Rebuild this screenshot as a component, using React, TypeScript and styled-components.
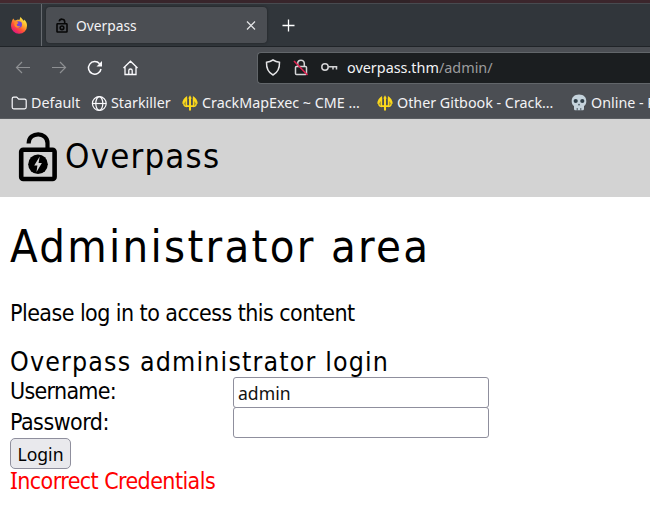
import React from "react";
import styled, { createGlobalStyle } from "styled-components";

const Global = createGlobalStyle`
  * { box-sizing: border-box; }
  html, body { margin: 0; background: #fff; overflow: hidden; }
`;

const Window = styled.div`
  width: 650px;
  height: 532px;
  overflow: hidden;
  display: flex;
  flex-direction: column;
  font-family: "Noto Sans", sans-serif;
  color: #f3f3f5;
`;
const Desktop = styled.div`
  height: 3px;
  flex: none;
  background: linear-gradient(90deg, #44292f 0 110px, #38252b 110px 300px, #302327 300px 410px, #3b262c 410px);
`;
const TabStrip = styled.div`
  height: 44px;
  flex: none;
  display: flex;
  align-items: center;
  background: #31363b;
  border-top: 1px solid #484b50;
  border-bottom: 1px solid #202428;
`;
const FirefoxView = styled.div`
  width: 42px;
  height: 42px;
  display: flex;
  align-items: center;
  padding-left: 10px;
  border-right: 1px solid #676b70;
`;
const Tab = styled.div`
  width: 221px;
  height: 36px;
  margin-left: 4px;
  padding: 1px 10px 0;
  display: flex;
  align-items: center;
  border-radius: 4px;
  background: #4b4e53;
  box-shadow: 0 0 3px rgba(0, 0, 0, 0.4);
`;
const TabTitle = styled.span`
  flex: 1;
  margin-left: 8px;
  font-size: 13.8px;
  line-height: 20px;
`;
const NewTab = styled.div`
  margin-left: 15px;
  height: 14px;
  display: flex;
`;
const NavBar = styled.div`
  height: 40px;
  flex: none;
  display: flex;
  align-items: center;
  background: #4b4e53;
`;
const NavButtons = styled.div`
  display: flex;
  gap: 20px;
  width: 257px;
  padding: 2px 0 0 15px;
`;
const UrlBar = styled.div`
  flex: 1;
  height: 32px;
  margin-top: 1px;
  display: flex;
  align-items: center;
  padding-left: 7px;
  background: #1b1e20;
  border: 1px solid #62666a;
  border-right: 0;
  border-radius: 4px 0 0 4px;
`;
const UrlIcons = styled.div`
  display: flex;
  gap: 12px;
`;
const Url = styled.span`
  margin-left: 9px;
  font-size: 14.4px;
  line-height: 20px;
  white-space: pre;
`;
const Path = styled.span`
  color: #9b9c9e;
`;
const Bookmarks = styled.div`
  height: 32px;
  flex: none;
  display: flex;
  align-items: center;
  background: #4b4e53;
  border-bottom: 1px solid #5a5d61;
`;
const Bookmark = styled.div<{ $w: number }>`
  width: ${(p) => p.$w}px;
  flex: none;
  display: flex;
  align-items: center;
  gap: 4px;
  font-size: 14.3px;
  line-height: 20px;
  white-space: nowrap;
  svg { flex: none; }
  &:first-child { margin-left: 11px; }
`;
const SiteHeader = styled.header`
  height: 78px;
  flex: none;
  padding: 0 0 3px 18px;
  display: flex;
  align-items: center;
  background: #d3d3d3;
  color: #000;
`;
const Type = styled.div<{ $size: number; $line: number; $spacing: number }>`
  font-family: "DejaVu Sans Condensed", "DejaVu Sans", sans-serif;
  font-stretch: condensed;
  font-size: ${(p) => p.$size}px;
  line-height: ${(p) => p.$line}px;
  letter-spacing: ${(p) => p.$spacing}px;
  white-space: nowrap;
`;
const Brand = styled(Type)`
  margin: 0 0 2px 7px;
`;
const Page = styled.main`
  flex: 1;
  padding: 20px 10px 0;
  background: #fff;
  color: #000;
`;
const Heading = styled(Type).attrs({ as: "h1" })`
  margin: 0 0 22px;
  font-weight: 400;
`;
const Intro = styled(Type)`
  margin-bottom: 20px;
`;
const Field = styled.label`
  display: grid;
  grid-template-columns: 223px 256px;
  height: 30px;
`;
const Input = styled.input`
  height: 31px;
  width: 256px;
  padding: 0 4px;
  border: 1px solid #8f8f9d;
  border-radius: 3px;
  background: #fff;
  color: #111;
  font: 17.6px "Noto Sans", sans-serif;
`;
const LoginButton = styled.button`
  display: block;
  width: 61px;
  height: 31px;
  margin-top: 1px;
  padding: 1px 0 0;
  border: 1px solid #8f8f9d;
  border-radius: 5px;
  background: #e9e9ed;
  color: #000;
  font: 17.6px "Noto Sans", sans-serif;
`;
const ErrorText = styled(Type)`
  color: #f00;
`;
const SerifI = styled.span`
  font-family: "Noto Sans", sans-serif;
  line-height: 1;
`;

const Firefox = () => (
  <svg width="18" height="18" viewBox="0 0 18 18">
    <defs>
      <linearGradient id="fire" x1=".85" y1=".1" x2=".25" y2=".95">
        <stop offset="0" stopColor="#fff04a" />
        <stop offset=".35" stopColor="#ffb02c" />
        <stop offset=".65" stopColor="#ff5135" />
        <stop offset="1" stopColor="#e3147f" />
      </linearGradient>
    </defs>
    <path d="M3.200 2.500 4.800 4.600l2-.5C7.500 3 8.800 3.300 9.200 4.300L10.700.7c.6 1.400 1.200 2 2 2.800l1.300 1.400.2-1.400c2 2 2.900 4 2.800 6.200A8 8 0 0 1 1 10c0-2.800.8-4.900 2.200-7.500Z" fill="url(#fire)" />
    <circle cx="8.800" cy="8.500" r="3.200" fill="#7347d6" />
    <path d="M4.500 6.200c1.500-.8 3-.4 4 .8L6.700 8.400l.4 1.300c1 .8 2.200.3 3.200.2-.9 2-3.300 2.400-5 .8-1-.9-1.300-2.700-.8-4.500Z" fill="#ff8a2d" />
  </svg>
);
const TabLock = () => (
  <svg width="12" height="15" viewBox="0 0 12 15" fill="none" stroke="#070707" strokeWidth="1.600">
    <rect x="1" y="5.800" width="10" height="8.200" rx=".6" />
    <path d="M3.200 3.400C3.700.4 8.500.4 8.700 3.600v2" />
    <circle cx="6" cy="9.800" r="1.800" />
  </svg>
);
const OverpassLock = () => (
  <svg width="40" height="51" viewBox="0 0 40 51">
    <rect x="3.200" y="18.700" width="33.400" height="29.300" rx="2" fill="none" stroke="#000" strokeWidth="4.600" />
    <path d="M10.700 12.500v-.7C11 .5 29.500.5 29.500 12v6" fill="none" stroke="#000" strokeWidth="4.200" />
    <circle cx="20" cy="33.300" r="9.800" fill="#000" />
    <path d="m21.700 25.600-5.500 8.900h3.200l-.9 6.500 5.400-9h-3.300Z" fill="#d3d3d3" />
  </svg>
);
const Trident = () => (
  <svg width="16" height="16" viewBox="0 0 16 16" fill="none" stroke="#fbd81b">
    <path d="M8 2v13.500" strokeWidth="2" />
    <path d="M4.300 3v6.500c0 1 .6 1.700 1.700 1.700h4c1.100 0 1.700-.7 1.700-1.700V3" strokeWidth="1.700" />
    <path d="M2.600 6C.8 9 2 11.500 5 11.500M13.400 6c1.800 3 .6 5.500-2.400 5.500" strokeWidth="1.500" />
    <path d="m8 .2 1.800 3.300H6.200ZM5.100 1v4.300L.2 9C.3 5.500 2.200 2.500 5.100 1ZM10.900 1v4.300L15.800 9c-.1-3.500-2-6.500-4.900-8Z" fill="#fbd81b" stroke="none" />
  </svg>
);
const Skull = () => (
  <svg width="16" height="17" viewBox="0 0 16 17">
    <path d="M8 .5c4.700 0 7.300 2.800 7.300 6.700 0 2.200-.7 3.800-2.300 4.900v2.700c0 1-.7 1.500-1.500 1.500h-7c-.8 0-1.500-.5-1.500-1.500v-2.700C1.400 11 .7 9.400.7 7.200.7 3.300 3.300.5 8 .5Z" fill="#c5d3dc" />
    <circle cx="4.700" cy="7" r="2.100" fill="#31404a" />
    <circle cx="11.300" cy="7" r="2.100" fill="#31404a" />
    <path d="m8 9.500 1.200 1.800H6.800Z" fill="#31404a" />
    <path d="M6.200 14v2.500M9.800 14v2.500" stroke="#4b5961" />
  </svg>
);

export default function App() {
  return (
    <Window>
      <Global />
      <Desktop />
      <TabStrip>
        <FirefoxView><Firefox /></FirefoxView>
        <Tab>
          <TabLock />
          <TabTitle>Overpass</TabTitle>
          <svg width="12" height="12" viewBox="0 0 12 12" stroke="#e4e5e7" strokeWidth="1.200"><path d="m2 1.500 8 8M10 1.500l-8 8" /></svg>
        </Tab>
        <NewTab>
          <svg width="14" height="14" viewBox="0 0 14 14" stroke="#fff" strokeWidth="1.300"><path d="M6.500 1.500v12M.5 7.500h12" /></svg>
        </NewTab>
      </TabStrip>
      <NavBar>
        <NavButtons>
          <svg width="16" height="16" viewBox="0 0 16 16" fill="none" stroke="#8e9093" strokeWidth="1.200"><path d="M15 7.500H1.500M7 2 1.500 7.500 7 13" /></svg>
          <svg width="16" height="16" viewBox="0 0 16 16" fill="none" stroke="#8e9093" strokeWidth="1.200"><path d="M1 7.500h13.500M9 2l5.500 5.500L9 13" /></svg>
          <svg width="16" height="16" viewBox="0 0 16 16" fill="none" stroke="#fbfbfe" strokeWidth="1.500"><path d="M14 9A6.300 6.300 0 1 1 12.600 3.800" /><path d="M15 1v5.500H9.500Z" fill="#fbfbfe" stroke="none" /></svg>
          <svg width="16" height="16" viewBox="0 0 16 16" fill="none" stroke="#fbfbfe" strokeWidth="1.300"><path d="M.5 8 7.500 1.200 14.500 8M2 6.700v7.800h11V6.700M5.800 14.500v-4c0-2 3.400-2 3.400 0v4" /></svg>
        </NavButtons>
        <UrlBar>
          <UrlIcons>
            <svg width="16" height="18" viewBox="0 0 16 18" fill="none" stroke="#e5e5e7" strokeWidth="1.500"><path d="M8 1c2 1.300 4 2 6.500 2.300.2 6-1.500 10.200-6.500 12.700C3 13.500 1.300 9.300 1.500 3.300 4 3 6 2.300 8 1Z" /></svg>
            <svg width="16" height="18" viewBox="0 0 16 18" fill="none" stroke="#d5d5d7" strokeWidth="1.500"><rect x="2.500" y="7.500" width="11" height="8" rx="1" /><path d="M4.700 7.500v-3c0-4.500 6.600-4.500 6.600 0v3" /><path d="m1 2 13.500 14" stroke="#df2352" strokeWidth="1.600" /></svg>
            <svg width="17" height="18" viewBox="0 0 17 18" fill="none" stroke="#d5d5d7" strokeWidth="1.500"><circle cx="4" cy="8" r="3.200" /><path d="M7.300 7.800h9M12 7.800v2.700M15.500 7.800v2.700" /></svg>
          </UrlIcons>
          <Url>overpass.thm<Path>/admin/</Path></Url>
        </UrlBar>
      </NavBar>
      <Bookmarks>
        <Bookmark $w={80}>
          <svg width="16" height="16" viewBox="0 0 16 16" fill="none" stroke="#fbfbfe" strokeWidth="1.200"><path d="M1.200 3.700c0-1 .5-1.500 1.500-1.500h3l2 2h6c1 0 1.500.5 1.500 1.500v6.600c0 1-.5 1.500-1.500 1.500h-11c-1 0-1.500-.5-1.500-1.500Z" /></svg>
          Default
        </Bookmark>
        <Bookmark $w={91}>
          <svg width="16" height="16" viewBox="0 0 16 16" fill="none" stroke="#fbfbfe" strokeWidth="1.200"><circle cx="8.300" cy="8.500" r="6.900" /><ellipse cx="8.300" cy="8.500" rx="3.500" ry="6.900" /><path d="M1.400 8.500h13.800" /></svg>
          Starkiller
        </Bookmark>
        <Bookmark $w={195}><Trident />CrackMapExec ~ CME …</Bookmark>
        <Bookmark $w={194}><Trident />Other Gitbook - Crack…</Bookmark>
        <Bookmark $w={120}><Skull />Online - R</Bookmark>
      </Bookmarks>
      <SiteHeader>
        <OverpassLock />
        <Brand $size={34.500} $line={46} $spacing={1.200}>Overpass</Brand>
      </SiteHeader>
      <Page>
        <Heading $size={45} $line={60} $spacing={2.300}>Administrator area</Heading>
        <Intro $size={23} $line={28} $spacing={-0.550}>Please log in to access this content</Intro>
        <Type $size={26.500} $line={30} $spacing={1.170}>Overpass administrator login</Type>
        <Field><Type $size={23} $line={28} $spacing={-0.700}>Username:</Type><Input defaultValue="admin" /></Field>
        <Field><Type $size={23} $line={30} $spacing={-0.500}>Password:</Type><Input type="password" /></Field>
        <LoginButton>Login</LoginButton>
        <ErrorText $size={23} $line={20} $spacing={-0.570}><SerifI>I</SerifI>ncorrect Credentials</ErrorText>
      </Page>
    </Window>
  );
}
